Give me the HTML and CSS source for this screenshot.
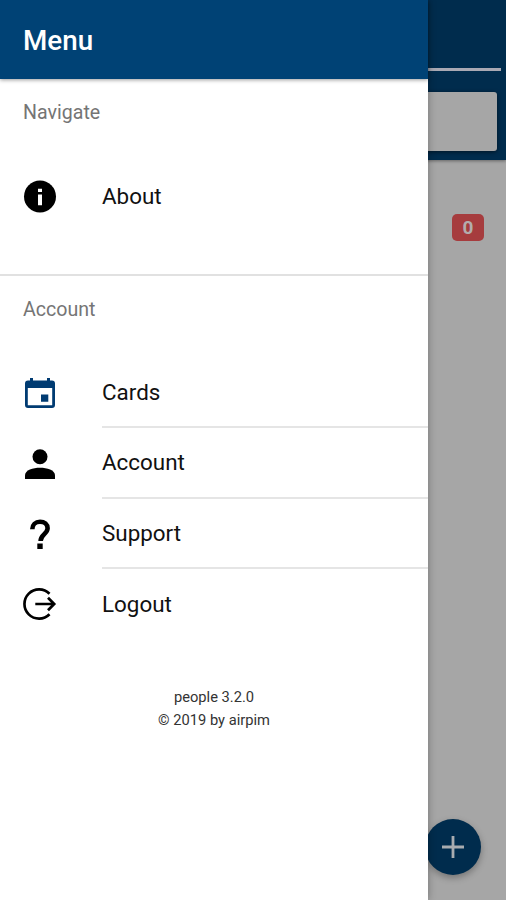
FILE: index.html
```html
<!DOCTYPE html>
<html lang="en">
<head>
<meta charset="utf-8">
<title>Menu</title>
<link rel="stylesheet" href="styles.css">
</head>
<body>
<main class="page">
  <header class="page-header">
    <div class="tab-line"></div>
    <div class="search-field"></div>
  </header>
  <div class="page-content"><span class="badge">0</span></div>
  <button class="fab" aria-label="Add"><svg viewBox="0 0 24 24" width="24" height="24"><path d="M12 1v22M1 12h22" fill="none" stroke="#a8acb0" stroke-width="2.8"/></svg></button>
</main>
<aside class="drawer">
  <header class="drawer-header">Menu</header>
  <section class="group group-navigate">
    <h2 class="group-title">Navigate</h2>
    <a class="item"><svg class="icon" viewBox="0 0 32 32"><circle cx="16" cy="16.5" r="16"/><path d="M14 8.7h4v3.3h-4zM14 14.5h4v10.7h-4z" fill="#fff"/></svg><span class="label">About</span></a>
  </section>
  <section class="group group-account">
    <h2 class="group-title">Account</h2>
    <a class="item"><svg class="icon icon-cards" viewBox="0 0 32 32"><path fill-rule="evenodd" d="M6 0h3v2.5h14V0h3v2.5h2a3 3 0 0 1 3 3V27a3 3 0 0 1-3 3H4a3 3 0 0 1-3-3V5.5a3 3 0 0 1 3-3h2zM3.8 10v17.2h24.4V10zM17 16.5h7.3v7.3H17z"/></svg><span class="label divided">Cards</span></a>
    <a class="item"><svg class="icon" viewBox="0 0 32 32"><circle cx="16" cy="8.7" r="7.5"/><path d="M1 31v-3.8C1 22.2 9 19.8 16 19.8s15 2.4 15 7.4V31z"/></svg><span class="label divided">Account</span></a>
    <a class="item"><svg class="icon" viewBox="0 0 32 32"><path d="M8.3 11.2C8.3 6.8 11.5 3.7 16 3.7s7.6 2.8 7.6 6.6c0 5.6-7 6.2-7 12.7" fill="none" stroke="#000" stroke-width="4.6"/><path d="M13.3 25.6h5.4v5.4h-5.4z"/></svg><span class="label divided">Support</span></a>
    <a class="item"><svg class="icon" viewBox="0 0 32 32"><path d="M25.5 5.8A14.6 14.6 0 1 0 25.5 26.2M11.3 16h18M24 9.7l6.2 6.3-6.2 6.3" fill="none" stroke="#000" stroke-width="2.7"/></svg><span class="label">Logout</span></a>
  </section>
  <footer class="version"><div>people 3.2.0</div><div>© 2019 by airpim</div></footer>
</aside>
</body>
</html>
```
FILE: styles.css
```css
* { box-sizing: border-box; }
body { margin: 0; height: 900px; position: relative; overflow: hidden; font-family: Roboto, sans-serif; color: #111; }
.page { height: 900px; background: #a6a6a6; }
.page-header { height: 160px; padding: 68px 5px 0 0; background: #002c4d; box-shadow: 0 1px 3px rgba(0,0,0,.4); }
.tab-line { height: 2.5px; background: #a9a9b3; }
.search-field { height: 59px; margin: 21.5px 4px 0 0; border-radius: 3px; background: #a6a6a6; box-shadow: 0 1px 4px rgba(0,0,0,.55); }
.page-content { display: flex; justify-content: flex-end; padding: 54px 22px 0 0; }
.badge { width: 32px; height: 27px; border-radius: 5px; background: #a63c3e; color: #b3adad; font-size: 19px; font-weight: 700; line-height: 27px; text-align: center; }
.fab { position: absolute; left: 425px; top: 819px; width: 56px; height: 56px; padding: 0; border: 0; border-radius: 50%; background: #002c4d; display: grid; place-items: center; box-shadow: 0 3px 7px rgba(0,0,0,.3); }
.drawer { position: absolute; left: 0; top: 0; width: 428px; height: 900px; background: #fff; box-shadow: 0 0 8px rgba(0,0,0,.3); }
.drawer-header { height: 79px; padding-left: 23px; background: #004275; color: #fff; font-size: 27.8px; font-weight: 500; line-height: 82px; box-shadow: 0 1px 4px rgba(0,0,0,.4); }
.group-navigate { height: 197px; border-bottom: 2px solid #e1e1e1; }
.group-account { height: 366px; }
.group-title { margin: 0; height: 82px; padding: 22px 0 0 23px; font-size: 19.6px; font-weight: 400; line-height: 24px; color: #757575; }
.item { height: 70.4px; display: flex; align-items: center; padding-left: 24px; }
.icon { width: 32px; height: 32px; margin-right: 46px; flex: none; overflow: visible; }
.icon-cards { fill: #003b72; position: relative; top: 1px; }
.label { flex: 1; height: 100%; line-height: 71px; font-size: 22.4px; }
.divided { border-bottom: 2px solid #e5e5e5; line-height: 69px; }
.version { margin-top: 44px; text-align: center; font-size: 14.7px; line-height: 22.5px; color: #333; }
```
